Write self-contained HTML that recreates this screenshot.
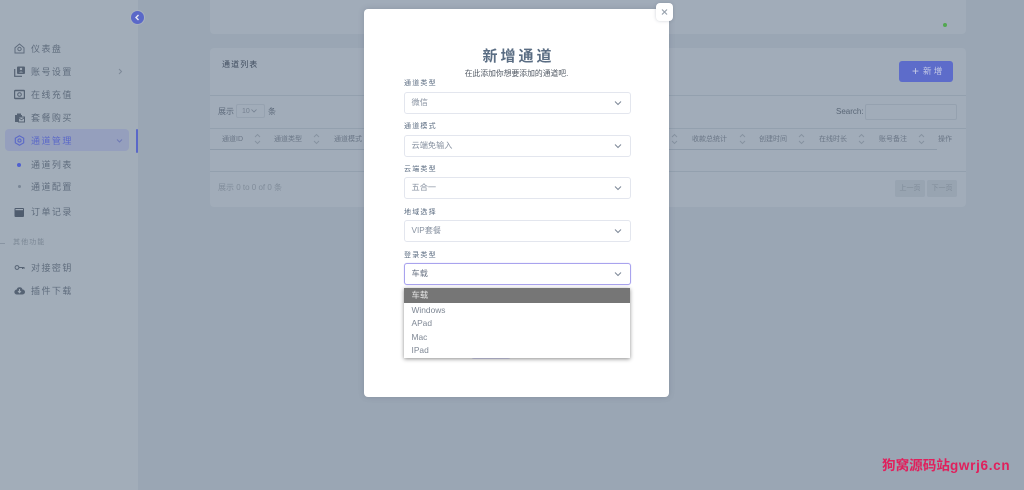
<!DOCTYPE html>
<html lang="zh"><head><meta charset="utf-8"><title>新增通道</title>
<style>
html,body{margin:0;padding:0;background:#9aa6b4}
body{width:1024px;height:490px;overflow:hidden;position:relative;font-family:"Liberation Sans","Noto Sans CJK SC",sans-serif;}
#w{position:absolute;left:0;top:0;width:1024px;height:490px;overflow:hidden;background:#9aa6b4;filter:blur(.35px)}
.a{position:absolute;white-space:nowrap}
#side{left:0;top:0;width:138px;height:490px;background:#a2adb9}
.card{background:#a1acb9;border-radius:4px}
.m{font-size:9px;letter-spacing:1.45px;color:#5f6c7d;left:31px;line-height:12px}
.ic{left:14px;width:11px;height:11px}
.line{background:#93a0ae;height:1px}
.th{font-size:7px;color:#6a7686;line-height:10px}
.sort{width:7px;height:12px}
#modal{left:364px;top:9px;width:305px;height:388px;background:#fff;border-radius:4px;box-shadow:0 0 6px rgba(70,80,100,.25)}
.lb{left:404px;font-size:7px;letter-spacing:1.2px;color:#5a6b80;line-height:10px}
.sel{left:404px;width:225px;height:20px;border:1px solid #e3e6ee;border-radius:3px;background:#fff}
.sel span{position:absolute;left:6.5px;top:4px;font-size:8.2px;line-height:12px;color:#8791a0}
.sel svg{position:absolute;right:8.5px;top:7px}
.op{left:404px;width:226px;height:13.6px;font-size:8.4px;line-height:13.6px;color:#7e8794;text-indent:7.5px}
</style></head><body><div id="w">
<div class="a" id="side"></div>
<div class="a" style="left:131px;top:11px;width:13px;height:13px;border-radius:50%;background:#5a68c8;box-shadow:0 0 0 1px #a8b2bf"></div>
<svg class="a" style="left:131px;top:11px" width="13" height="13" viewBox="0 0 13 13"><path d="M7.5 4 5 6.5 7.5 9" fill="none" stroke="#e8eaf5" stroke-width="1.4"/></svg>

<svg class="a ic" style="top:43px" viewBox="0 0 11 11" fill="none" stroke="#5f6c7d"><path d="M1 4.8 5.5 1 10 4.8V10H1Z"/><circle cx="5.5" cy="6" r="1.7"/></svg>
<div class="a m" style="top:43px">仪表盘</div>
<svg class="a ic" style="top:66px" viewBox="0 0 11 11"><rect x="3" y="0.5" width="8" height="7.5" rx="1" fill="#566374"/><circle cx="7" cy="3" r="1.2" fill="#a2adb9"/><path d="M5 6.5q2-2 4 0" fill="#a2adb9"/><path d="M.7 3v7.3H8" fill="none" stroke="#566374" stroke-width="1.2"/></svg>
<div class="a m" style="top:66px">账号设置</div>
<svg class="a" style="left:117px;top:68px" width="6" height="7" viewBox="0 0 6 7"><path d="M2 1l2.5 2.5L2 6" fill="none" stroke="#7d8998"/></svg>
<svg class="a ic" style="top:89px" viewBox="0 0 11 11"><rect x=".5" y="1.5" width="10" height="8" rx="1" fill="none" stroke="#566374" stroke-width="1.4"/><circle cx="5.5" cy="5.5" r="1.8" fill="none" stroke="#566374"/></svg>
<div class="a m" style="top:89px">在线充值</div>
<svg class="a ic" style="top:112px" viewBox="0 0 11 11"><path d="M1 3h2V1.500h4V3h1v2H4v5H1Z" fill="#566374"/><rect x="4.500" y="5" width="6" height="5" fill="none" stroke="#566374"/><path d="M5 6l2.500 1.800L10 6" fill="none" stroke="#566374" stroke-width=".8"/></svg>
<div class="a m" style="top:112px">套餐购买</div>

<div class="a" style="left:5px;top:129px;width:124px;height:22px;border-radius:4px;background:#959fbd"></div>
<div class="a" style="left:135.500px;top:129px;width:2px;height:24px;border-radius:1px;background:#5a68c8"></div>
<svg class="a ic" style="top:135px" viewBox="0 0 11 11" fill="none" stroke="#5a68c8" stroke-width="1.100"><path d="M5.500.8 9.700 3.200V7.800L5.500 10.200 1.300 7.800V3.200Z"/><circle cx="5.500" cy="5.500" r="1.600"/></svg>
<div class="a m" style="top:135px;color:#5a68c8">通道管理</div>
<svg class="a" style="left:116px;top:138px" width="7" height="6" viewBox="0 0 7 6"><path d="M1 1.500l2.500 2.500L6 1.500" fill="none" stroke="#6f7ab5"/></svg>

<div class="a" style="left:16.500px;top:162.500px;width:4.500px;height:4.500px;border-radius:50%;background:#5060d0"></div>
<div class="a m" style="top:159px">通道列表</div>
<div class="a" style="left:17.500px;top:185px;width:3px;height:3px;border-radius:50%;background:#7a8796"></div>
<div class="a m" style="top:181px">通道配置</div>
<svg class="a ic" style="top:207px" viewBox="0 0 11 11"><rect x=".5" y="1" width="9.500" height="9" rx="1" fill="#4f5c6e"/><rect x="1.500" y="2" width="7.500" height="1.200" fill="#a2adb9"/></svg>
<div class="a m" style="top:206px">订单记录</div>
<div class="a" style="left:0;top:242.500px;width:5px;height:1px;background:#8995a3"></div>
<div class="a" style="left:13px;top:238px;font-size:7px;letter-spacing:1.100px;line-height:10px;color:#7b8795">其他功能</div>
<svg class="a ic" style="top:262px" viewBox="0 0 11 11" fill="none" stroke="#566374"><circle cx="3" cy="5.500" r="1.900"/><path d="M5 5.500h5.500M8.500 5.500v1.500M10 5.500v1.500"/></svg>
<div class="a m" style="top:262px">对接密钥</div>
<svg class="a ic" style="top:285px" viewBox="0 0 11 11"><path d="M3 9.500A2.500 2.500 0 0 1 2.700 4.500 3 3 0 0 1 8.500 4.500 2.500 2.500 0 0 1 8.500 9.500Z" fill="#566374"/><path d="M5.500 4v3.500M4 6l1.500 1.700L7 6" stroke="#a2adb9" fill="none"/></svg>
<div class="a m" style="top:285px">插件下载</div>

<div class="a card" style="left:210px;top:-10px;width:756px;height:44px"></div>
<div class="a" style="left:942.500px;top:23px;width:4px;height:4px;border-radius:50%;background:#52a851"></div>

<div class="a card" style="left:210px;top:48px;width:756px;height:159px"></div>
<div class="a" style="left:222px;top:60px;font-size:8px;letter-spacing:1.100px;line-height:10px;color:#3f4c5e">通道列表</div>
<div class="a" style="left:899px;top:61px;width:54px;height:21px;border-radius:3px;background:#5d6cca"></div>
<div class="a" style="left:912px;top:65px;font-size:12px;line-height:12px;color:#c6cbe6">+</div>
<div class="a" style="left:923px;top:65px;font-size:8.500px;letter-spacing:2.200px;line-height:12px;color:#c6cbe6">新增</div>
<div class="a line" style="left:210px;top:95px;width:756px"></div>
<div class="a" style="left:218px;top:106px;font-size:8px;line-height:11px;color:#5d6a7b">展示</div>
<div class="a" style="left:236px;top:104px;width:29px;height:14px;border:1px solid #96a2b0;border-radius:2px;box-sizing:border-box"></div>
<div class="a" style="left:242px;top:107px;font-size:7px;line-height:9px;color:#748090">10</div>
<svg class="a" style="left:251px;top:109px" width="6" height="4" viewBox="0 0 6 4"><path d="M.5.500l2.500 2.500L5.500.500" fill="none" stroke="#748090" stroke-width=".8"/></svg>
<div class="a" style="left:268px;top:106px;font-size:8px;line-height:11px;color:#5d6a7b">条</div>
<div class="a" style="left:836px;top:106px;font-size:8px;line-height:11px;color:#596676">Search:</div>
<div class="a" style="left:865px;top:104px;width:92px;height:16px;border:1px solid #95a1af;border-radius:2px;box-sizing:border-box"></div>
<div class="a line" style="left:210px;top:128px;width:756px"></div>
<div class="a line" style="left:210px;top:149px;width:727px;background:#8d9aa9"></div>
<div class="a line" style="left:210px;top:171px;width:756px"></div>

<div class="a th" style="left:222px;top:135px">通道ID</div>
<div class="a th" style="left:274px;top:135px">通道类型</div>
<div class="a th" style="left:334px;top:135px">通道模式</div>
<div class="a th" style="left:692px;top:135px">收款总统计</div>
<div class="a th" style="left:759px;top:135px">创建时间</div>
<div class="a th" style="left:819px;top:135px">在线时长</div>
<div class="a th" style="left:879px;top:135px">账号备注</div>
<div class="a th" style="left:938px;top:135px">操作</div>
<svg width="0" height="0" style="position:absolute"><symbol id="s" viewBox="0 0 7 12"><path d="M1 4l2.500-2.500L6 4M1 8l2.500 2.500L6 8" fill="none" stroke="#85919f" stroke-width=".9"/></symbol></svg>
<svg class="a sort" style="left:254px;top:133px"><use href="#s"/></svg>
<svg class="a sort" style="left:313px;top:133px"><use href="#s"/></svg>
<svg class="a sort" style="left:371px;top:133px"><use href="#s"/></svg>
<svg class="a sort" style="left:671px;top:133px"><use href="#s"/></svg>
<svg class="a sort" style="left:739px;top:133px"><use href="#s"/></svg>
<svg class="a sort" style="left:798px;top:133px"><use href="#s"/></svg>
<svg class="a sort" style="left:858px;top:133px"><use href="#s"/></svg>
<svg class="a sort" style="left:918px;top:133px"><use href="#s"/></svg>

<div class="a" style="left:218px;top:182px;font-size:8px;line-height:11px;color:#808c9a">展示 0 to 0 of 0 条</div>
<div class="a" style="left:895px;top:180px;width:30px;height:17px;border-radius:2px;background:#98a4b1;font-size:7px;line-height:17px;text-align:center;color:#7f8b99">上一页</div>
<div class="a" style="left:927px;top:180px;width:30px;height:17px;border-radius:2px;background:#98a4b1;font-size:7px;line-height:17px;text-align:center;color:#7f8b99">下一页</div>

<div class="a" id="modal"></div>
<div class="a" style="left:656px;top:3px;width:17px;height:18px;background:#fff;border-radius:4px;box-shadow:0 0 3px rgba(90,100,120,.3)"></div>
<svg class="a" style="left:661px;top:9px" width="7" height="6" viewBox="0 0 7 6"><path d="M1 .500l5 5M6 .500l-5 5" stroke="#98a1ad" stroke-width="1.200"/></svg>

<div class="a" style="left:366px;width:305px;top:47px;text-align:center;font-size:15px;font-weight:700;letter-spacing:3px;line-height:20px;color:#5a6d83">新增通道</div>
<div class="a" style="left:364px;width:305px;top:68px;text-align:center;font-size:7.800px;line-height:12px;color:#4f5762">在此添加你想要添加的通道吧.</div>

<div class="a lb" style="top:78.500px">通道类型</div>
<div class="a sel" style="top:92px"><span>微信</span><svg width="8" height="6" viewBox="0 0 8 6"><path d="M1 1.500l3 3 3-3" fill="none" stroke="#7c8797"/></svg></div>
<div class="a lb" style="top:121.500px">通道模式</div>
<div class="a sel" style="top:135px"><span>云端免输入</span><svg width="8" height="6" viewBox="0 0 8 6"><path d="M1 1.500l3 3 3-3" fill="none" stroke="#7c8797"/></svg></div>
<div class="a lb" style="top:164.500px">云端类型</div>
<div class="a sel" style="top:177px"><span>五合一</span><svg width="8" height="6" viewBox="0 0 8 6"><path d="M1 1.500l3 3 3-3" fill="none" stroke="#7c8797"/></svg></div>
<div class="a lb" style="top:207.500px">地域选择</div>
<div class="a sel" style="top:220px"><span>VIP套餐</span><svg width="8" height="6" viewBox="0 0 8 6"><path d="M1 1.500l3 3 3-3" fill="none" stroke="#7c8797"/></svg></div>
<div class="a lb" style="top:250.500px">登录类型</div>
<div class="a sel" style="top:263px;border-color:#a9a3ee;box-shadow:0 0 1px #c9c6f5"><span style="color:#6c7686">车载</span><svg width="8" height="6" viewBox="0 0 8 6"><path d="M1 1.500l3 3 3-3" fill="none" stroke="#7c8797"/></svg></div>

<div class="a" style="left:471px;top:352px;width:40px;height:7px;background:#dcdcfa;border-radius:0 0 3px 3px"></div>
<div class="a" style="left:404px;top:288px;width:226px;height:69.500px;background:#fff;box-shadow:0 1px 4px rgba(0,0,0,.45)"></div>
<div class="a op" style="top:288px;height:15px;line-height:15px;background:#767676;color:#e6e6e6">车载</div>
<div class="a op" style="top:303.500px">Windows</div>
<div class="a op" style="top:317px">APad</div>
<div class="a op" style="top:330.500px">Mac</div>
<div class="a op" style="top:344px">IPad</div>

<div class="a" style="left:882px;top:458px;font-size:13.600px;font-weight:700;line-height:16px;color:#e0205c">狗窝源码站<span style="letter-spacing:.7px;font-size:13.500px">gwrj6.cn</span></div>
</div></body></html>
